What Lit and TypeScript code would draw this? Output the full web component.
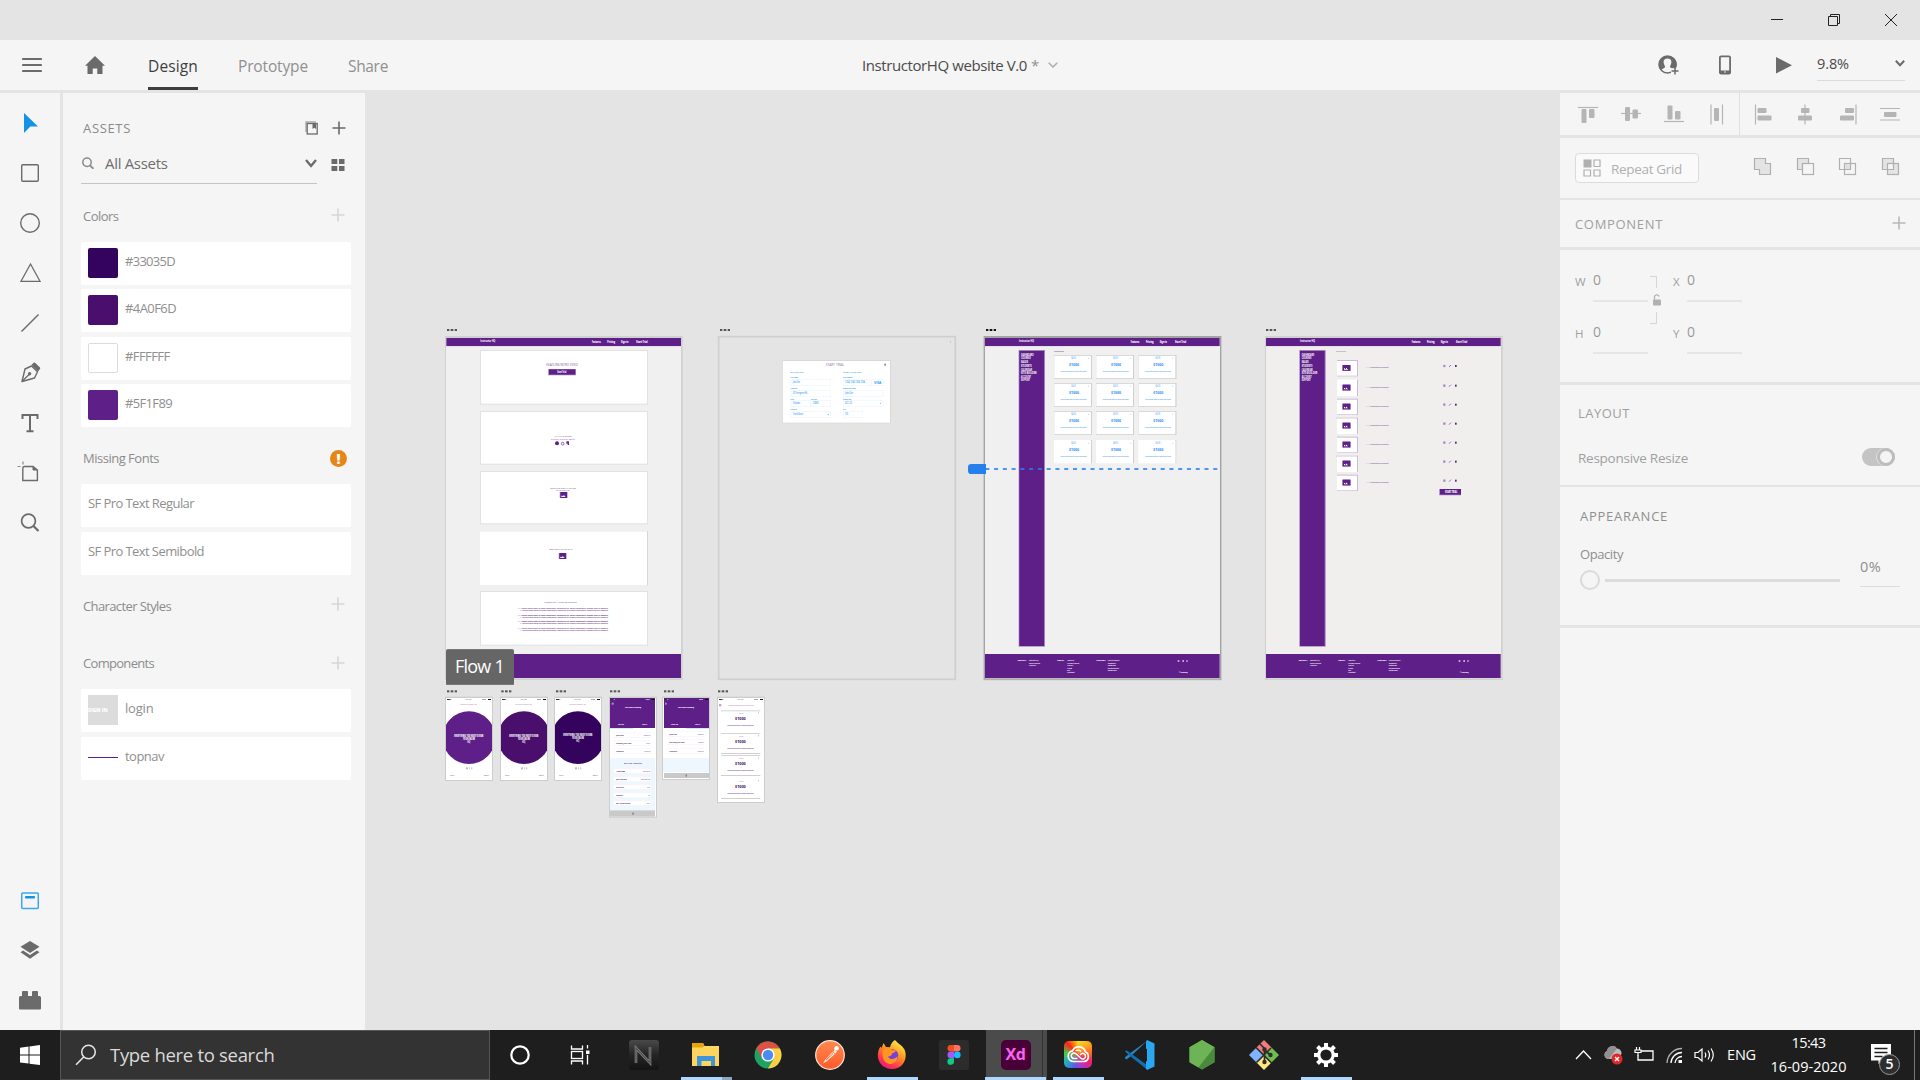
import { LitElement, html, css, svg } from "lit";
import { customElement, property } from "lit/decorators.js";

/* Label whose tracking is adjusted so that it fills a given width. */
@customElement("ui-text")
class UiText extends LitElement {
  static styles = css`
    :host { display: inline-block; flex: none; white-space: pre; }
  `;
  @property({ type: Number }) w = 0;
  render() {
    return html`<span><slot></slot></span>`;
  }
  firstUpdated() {
    const n = (this.textContent || "").length;
    if (!this.w || !n) return;
    const natural = this.getBoundingClientRect().width;
    this.style.letterSpacing = ((this.w - natural) / n).toFixed(3) + "px";
  }
}

const P = "#5f1f89";
const D = "#33035d";
const BLUE = "#2f9bf5";

const r = (x: number, y: number, w: number, h: number, f: string, o = 1) =>
  svg`<rect x=${x} y=${y} width=${w} height=${h} fill=${f} opacity=${o}></rect>`;
/* Miniature text: left edge, baseline, width. */
const t = (x: number, y: number, w: number, s: string, f: string, fs = 8, o = 1, b = 600) =>
  svg`<text x=${x} y=${y} textLength=${w} lengthAdjust="spacingAndGlyphs" font-size=${fs} font-weight=${b} fill=${f} opacity=${o}>${s}</text>`;
const dots = (x: number, y: number, f = "#555") =>
  svg`${r(x, y, 7, 6, f)}${r(x + 11, y, 8, 6, f)}${r(x + 23, y, 7, 6, f)}`;
const frame = (x: number, y: number, w: number, h: number, c: string, bg: string) =>
  svg`${r(x - 3, y - 6, w + 8, h + 11, c)}${r(x, y, w, h, bg)}`;
const card = (x: number, y: number, w: number, h: number) =>
  svg`${r(x, y, w, h, "#e2e2e2")}${r(x + 3, y + 3, w - 6, h - 6, "#fff")}`;

const topnav = (x: number) => svg`
  ${r(x, 54, 704, 24, P)}${r(x, 78, 704, 3, "#e4e0e6")}
  ${t(x + 102, 67, 45, "Instructor HQ", "#fff", 9, 1, 700)}
  ${t(x + 437, 69, 26, "Features", "#fff", 9, 1, 800)}${t(x + 483, 69, 23, "Pricing", "#fff", 9, 1, 800)}
  ${t(x + 524, 69, 22, "Sign in", "#fff", 9, 1, 800)}${t(x + 570, 69, 34, "Start Trial", "#fff", 9, 1, 800)}`;

const footer = (x: number) => svg`
  ${r(x, 1002, 704, 72, P)}
  ${t(x + 98, 1024, 26, "PRODUCT", "#fff", 6, 1, 800)}
  ${["Instructor HQ", "Online Courses", "Analytics"].map((s, i) => t(x + 132, [1024, 1033, 1039][i], [28, 33, 20][i], s, "#fff", 7, 1, 700))}
  ${t(x + 217, 1024, 20, "ABOUT", "#fff", 6, 1, 800)}
  ${["About us", "Privacy policy", "Careers", "Press", "Blog", "Contact"].map((s, i) => t(x + 247, [1024, 1033, 1039, 1048, 1054, 1060][i], [20, 36, 17, 14, 8, 22][i], s, "#fff", 7, 1, 700))}
  ${t(x + 334, 1024, 28, "SUPPORT", "#fff", 6, 1, 800)}
  ${["Help and Support", "Community", "Tutorials", "Documentation", "Knowledge"].map((s, i) => t(x + 368, [1024, 1033, 1039, 1048, 1054][i], [35, 24, 24, 34, 27][i], s, "#fff", 7, 1, 700))}
  ${r(x + 578, 1020, 5, 6, "#fff", 0.6)}${r(x + 592, 1020, 5, 6, "#fff", 0.6)}${r(x + 604, 1020, 4, 6, "#fff", 0.6)}
  ${t(x + 582, 1060, 26, "© 2020 HQ", "#fff", 6, 1, 800)}`;

const sidenav = (x: number) => svg`
  ${r(x, 90, 79, 890, "#a37fbb")}${r(x + 2, 93, 74, 885, P)}
  ${["DASHBOARD", "COURSES", "SALES", "STUDENTS", "CALENDAR", "SITE BUILDER", "ACCOUNT", "SUPPORT"].map((s, i) =>
    t(x + 7, [108, 117, 129, 141, 153, 162, 174, 183][i], [38, 29, 21, 32, 33, 47, 30, 27][i], s, "#fff", 7.5, 1, 700))}`;

const imageGlyph = (x: number, y: number, w = 20, h = 18) => svg`
  ${r(x - 2, y, w + 4, h, P, 0.45)}${r(x, y, w, h, P)}
  <path d=${`M${x + 3} ${y + h - 3}v-4h3v2h3v-3h3v3h3v2z`} fill="#fff"></path>`;

const board1 = svg`
  ${dots(51, 27)}${frame(48, 54, 705, 1021, "#d0d0d0", "#f0f0f0")}${topnav(49)}
  ${card(150, 90, 504, 164)}${card(150, 273, 504, 161)}${card(150, 453, 504, 160)}
  ${r(150, 633, 504, 163, "#d6d6d6")}${r(150, 634, 501, 162, "#fff")}${card(150, 813, 504, 164)}
  ${t(348, 137, 96, "HEADLINE/INTRO VIDEO", P, 10, 0.8, 400)}
  ${r(354, 147, 84, 19, "#b695ca")}${r(357, 148, 79, 16, P)}${t(382, 159, 27, "Start Trial", "#fff", 9.5, 1, 800)}
  ${t(373, 351, 52, "WHAT WE OFFER", P, 7, 0.85, 400)}${t(363, 360, 72, "SIMPLE AND EASY SETUP", P, 7, 0.85, 400)}
  <circle cx="381" cy="370" r="6" fill=${P}></circle>
  <circle cx="398" cy="371" r="4" fill="none" stroke=${P} stroke-width="2"></circle>${r(409, 364, 8, 7, P)}${r(413, 370, 4, 5, P)}
  ${t(360, 507, 78, "GETTING STARTED IN MINUTES", P, 7, 0.85, 400)}${t(378, 513, 40, "IS SIMPLE", P, 6, 0.8, 400)}
  ${imageGlyph(391, 516)}
  ${t(357, 690, 69, "TESTIMONIALS/REVIEWS", P, 7, 0.85, 400)}${imageGlyph(388, 699)}
  ${t(343, 849, 97, "FREQUENTLY ASKED QUESTIONS", P, 7, 0.85, 400)}
  ${[868, 888, 907, 928].map((y, i) => svg`
    ${t(264, y, 270, "• 1. Lorem ipsum dolor sit amet consectetur adipiscing elit. Donec consectetur semper sem in molestie", i === 1 || i === 2 ? D : P, 7)}
    ${t(270, y + 5, 264, "1. Lorem ipsum dolor sit amet consectetur adipiscing elit. Donec consectetur semper sem in molestie", P, 7)}`)}
  ${r(49, 1002, 704, 72, P)}`;

const field = (x: number, y: number, w: number) =>
  svg`<rect x=${x} y=${y} width=${w} height="18" fill="#fff" stroke="#eaf5fe" stroke-width="2"></rect>`;

const board2 = svg`
  ${dots(60, 27)}
  <rect x="56" y="50" width="710" height="1028" fill="none" stroke="#cfcfcf" stroke-width="5"></rect>
  ${r(750, 63, 3, 5, "#c4c4c4")}
  ${r(248, 120, 325, 190, "#d8d8d8")}${r(249, 123, 321, 185, "#fff")}
  ${t(377, 138, 56, "START TRIAL", P, 11, 0.7, 400)}${r(553, 131, 5, 6, P, 0.6)}
  ${t(271, 159, 40, "BILLING INFO", BLUE, 6)}${t(429, 159, 56, "CREDIT CARD INFO", BLUE, 6)}
  ${t(271, 174, 23, "Full Name", BLUE, 6, 1, 700)}${t(429, 174, 29, "Card Number", BLUE, 6, 1, 700)}
  ${field(273, 179, 119)}${field(430, 179, 80)}${field(514, 179, 36)}
  ${t(278, 190, 22, "John Doe", BLUE, 8)}${t(435, 190, 60, "1234 1234 1234 1234", BLUE, 8)}${t(522, 191, 22, "VISA", BLUE, 9, 1, 700)}
  ${t(271, 207, 20, "Address", BLUE, 6, 1, 700)}${t(429, 207, 39, "Name on Card", BLUE, 6, 1, 700)}
  ${field(273, 211, 119)}${field(430, 211, 119)}
  ${t(278, 222, 43, "321 Evergreen Rd", BLUE, 8)}${t(435, 222, 24, "John Doe", BLUE, 8)}
  ${t(271, 240, 11, "City", BLUE, 6, 1, 700)}${t(333, 240, 18, "Zip code", BLUE, 6, 1, 700)}${t(429, 240, 24, "Expires", BLUE, 6, 1, 700)}
  ${field(273, 242, 58)}${field(333, 242, 59)}${field(430, 242, 119)}
  ${t(279, 252, 21, "Orlando", BLUE, 8)}${t(339, 252, 17, "32801", BLUE, 8)}${t(435, 252, 21, "02 / 22", BLUE, 8)}${r(540, 249, 3, 3, BLUE, 0.6)}
  ${t(271, 270, 20, "Country", BLUE, 6, 1, 700)}${t(429, 270, 9, "CVV", BLUE, 6, 1, 700)}
  ${field(273, 275, 119)}${field(430, 275, 58)}
  ${t(279, 285, 30, "United States", BLUE, 8)}${r(383, 282, 4, 3, BLUE, 0.6)}${t(435, 285, 9, "123", BLUE, 8)}`;

const tiles: any[] = [];
[105, 189, 273, 360].forEach((y, row) =>
  [282, 408, 535].forEach((x) =>
    tiles.push(svg`
      ${r(x, y, 114, row === 3 ? 70 : 72, row === 3 ? "#fff" : "#d9d9d9")}${r(x + 111, y, 3, row === 3 ? 70 : 72, "#d0d0d0")}
      ${r(x + 1, y + 3, 110, 66, "#fff")}
      ${t(x + 51, y + 12, 15, "SALES", BLUE, 8, 0.7)}${r(x + 102, y + 8, 3, 4, BLUE, 0.3)}
      ${t(x + 45, y + 33, 30, "$1000", "#1f8ff0", 12.5, 1, 700)}
      ${t(x + 20, y + 52, 78, "lorem ipsum dolor sit amet description", BLUE, 7)}`)));

const board3 = svg`
  ${dots(78, 27, "#111")}
  ${r(69, 48, 717, 1033, "#cacaca")}${r(72, 48, 711, 1031, "#a3a3a3")}${r(75, 54, 705, 1021, "#f0f0f0")}
  ${topnav(75)}${r(780, 54, 3, 1022, "#a3a3a3")}${sidenav(176)}
  ${t(282, 96, 30, "Dashboard", P, 6.5, 0.8)}
  ${tiles}${footer(75)}${r(780, 1000, 3, 78, "#a3a3a3")}
  <path d="M78 432H34q-10 0-10 10v10q0 10 10 10H78z" fill="#2680eb"></path>
  ${Array.from({ length: 27 }, (_, i) => r(76 + i * 26.3, 444, 12, 6, "#2680eb", 0.8))}`;

const board4 = svg`
  ${dots(48, 27)}${frame(48, 54, 705, 1021, "#d0d0d0", "#f0efee")}${topnav(48)}${sidenav(148)}
  ${t(258, 96, 30, "COURSES", P, 6.5, 0.6)}
  ${[120, 179, 236, 293, 350, 407, 464].map((y, i) => svg`
    ${r(261, y, 60, 49, i % 2 ? "#fff" : "#cdb9dc")}${r(321, y, 3, 49, "#cdb9dc")}${i === 3 || i === 5 ? r(259, y, 65, 3, "#cdb9dc") : ""}
    ${r(261, i === 1 ? y : y + 3, 60, i % 2 ? 44 : 44, "#fff")}
    ${r(276, y + 15, 27, 18, P, 0.4)}${imageGlyph(279, y + 15, 21, 17)}
    ${t(348, y + 24, 68, "1. — Introduction to Design", P, 6, 0.8)}
    <circle cx="583" cy=${y + 18} r="4" fill=${P} opacity="0.45"></circle>
    <path d=${`M597 ${y + 21}l6 -6`} stroke=${P} stroke-width="3" opacity="0.6"></path>
    ${r(615, y + 15, 5, 6, P)}`)}
  ${r(567, 507, 66, 19, "#b695ca")}${r(570, 507, 63, 17, P)}${t(585, 519, 37, "START TRIAL", "#fff", 8, 1, 800)}
  ${footer(48)}`;

const phone = (x: number, w: number, h: number, dx = 3) => svg`
  ${dots(x + dx, 31)}${r(x - 3, 50, w + 6, h + 7, "#cdcdcd")}${r(x, 54, w, h, "#fff")}`;
const status = (x: number) => svg`
  ${r(x + 3, 57, 9, 3, "#333")}${r(x + 12, 57, 4, 3, "#999")}${t(x + 59, 60, 17, "9:41 AM", "#444", 5)}${r(x + 108, 57, 12, 3, "#aaa")}${r(x + 126, 57, 9, 3, "#111")}`;

const intro = (x: number, id: string, c: string, dy: number) => svg`
  ${phone(x, 138, 246, x === 213 ? 1 : 3)}${status(x)}
  ${t(x + 42, 75, 50, "INSTRUCTORHQ", P, 7, 0.6, 400)}
  <clipPath id=${id}><rect x=${x} y="54" width="138" height="246"></rect></clipPath>
  <circle cx=${x + 69} cy="173" r="79" fill=${c} clip-path=${`url(#${id})`}></circle>
  ${t(x + 25, 171 - dy, 87, "EVERYTHING YOU NEED TO RUN", "#fff", 8.5, 1, 800)}
  ${t(x + 51, 180 - dy, 36, "YOUR ONLINE", "#fff", 8, 1, 800)}${t(x + 64, 189 - dy, 9, "HQ", "#fff", 8, 1, 700)}
  ${r(x + 61, 262, 4, 6, P, 0.5)}${r(x + 69, 262, 3, 6, P, 0.25)}${r(x + 75, 262, 4, 6, P, 0.25)}
  ${t(x + 13, 289, 12, "SKIP", P, 6, 0.8)}${t(x + 113, 289, 15, "NEXT", P, 6, 0.8)}`;

const listRow = (x: number, y: number, a: string, aw: number, bw: number) => svg`
  ${r(x + 12, y - 8, 111, 15, "#fff")}${r(x + 12, y - 8, 111, 1.5, "#f2eef5")}${r(x + 12, y + 6, 111, 1.5, "#f2eef5")}
  ${t(x + 18, y + 2, aw, a, D, 6.5)}${t(x + 121 - bw, y + 2, bw, "Details", P, 6, 0.7)}`;

const phones = svg`
  ${r(48, 0, 204, 14, "#666")}
  ${intro(48, "c1", P, 0)}${intro(213, "c2", "#4a0f6d", 0)}${intro(375, "c3", D, 3)}
  ${phone(540, 138, 356, 0)}${r(540, 54, 135, 90, P)}${status(539)}
  ${r(545, 68, 6, 6, "#fff", 0.5)}${t(585, 84, 48, "INSTRUCTORHQ", "#fff", 7, 1, 800)}
  ${t(564, 135, 18, "SIGN UP", "#fff", 6.5, 1, 800)}${t(636, 135, 15, "SIGN IN", "#fff", 6.5, 1, 800)}
  ${r(540, 144, 69, 3, "#cfe8fb")}
  ${listRow(540, 166, "John Doe", 23, 20)}${listRow(540, 190, "johndoe@mail.com", 46, 12)}${listRow(540, 214, "Password", 23, 18)}
  ${r(540, 234, 135, 157, "#eff7fe")}${t(582, 252, 54, "BILLING ADDRESS", P, 6)}
  ${listRow(540, 274, "Address", 27, 22)}${listRow(540, 298, "John Evans", 32, 28)}${listRow(540, 322, "California", 24, 10)}${listRow(540, 346, "Country", 22, 7)}${listRow(540, 370, "321 Evergreen", 43, 11)}
  ${r(540, 391, 135, 19, "#c9c9c9")}${r(606, 398, 6, 6, P, 0.4)}
  ${phone(699, 138, 243, 3)}${r(702, 54, 135, 90, P)}${status(699)}
  ${r(705, 68, 5, 6, "#fff", 0.5)}${t(744, 84, 48, "INSTRUCTORHQ", "#fff", 7, 1, 800)}
  ${t(723, 135, 21, "SIGN UP", "#fff", 6.5, 1, 800)}${t(795, 135, 15, "SIGN IN", "#fff", 6.5, 1, 800)}
  ${r(768, 144, 69, 3, "#cfe8fb")}
  ${listRow(700, 163, "John Doe", 23, 18)}${listRow(700, 187, "johndoe@mail.com", 46, 16)}${listRow(700, 213, "Password", 23, 18)}
  ${r(699, 234, 138, 42, "#eff7fe")}${r(702, 279, 135, 15, "#c9c9c9")}${r(767, 283, 4, 7, P, 0.5)}
  ${phone(864, 138, 312, 0)}${status(864)}
  ${r(867, 72, 7, 7, P, 0.4)}${t(894, 78, 77, "INSTRUCTORHQ DASHBOARD", P, 7, 0.7, 400)}
  ${[91, 160, 226, 295].map((y, i) => svg`
    ${i === 3 ? "" : r(873, y - (i ? 1 : 0), 118, 3, "#d4d4d4")}
    ${t(927, y + 10, 13, "SALES", P, 7, 0.6)}${r(984, y + 6, 3, 3, P, 0.4)}
    ${t(915, y + 29, 32, "$1000", D, 12.5, 1, 700)}
    ${t(892, y + 47, 79, "lorem ipsum dolor sit amet description", P, 6.5)}`)}
  ${r(873, 219, 118, 3, "#cfcfcf")}${r(873, 285, 118, 3, "#cfcfcf")}${r(873, 354, 118, 3, "#cfcfcf")}`;

const g = (w: number, h: number, body: unknown) =>
  html`<svg class="ic" width=${w} height=${h} viewBox=${`0 0 ${w} ${h}`} fill="none">${body}</svg>`;

const plus = (cls = "") => html`<svg class="ic plus ${cls}" width="14" height="14" viewBox="0 0 14 14"><path d="M7 .5v13M.5 7h13"></path></svg>`;

const tools = [
  g(30, 30, svg`<path d="M9 5l14 13.500h-7.600L9 25z" fill="#1492e6"></path>`),
  g(30, 30, svg`<rect x="6.700" y="6.700" width="16.600" height="16.600" rx="1" stroke="#6b6b6b" stroke-width="1.400"></rect>`),
  g(30, 30, svg`<circle cx="15" cy="15" r="9.300" stroke="#6b6b6b" stroke-width="1.400"></circle>`),
  g(30, 30, svg`<path d="M15.500 6L25 23.300H6z" stroke="#6b6b6b" stroke-width="1.300"></path>`),
  g(30, 30, svg`<path d="M6.500 23.500L23.500 6.500" stroke="#6b6b6b" stroke-width="1.500"></path>`),
  g(30, 30, svg`<path d="M16.500 8l6 5.800-3 6.200L7 23.500l3-12.500z" stroke="#6b6b6b" stroke-width="1.400" stroke-linejoin="round"></path><path d="M7 23.500l7-7" stroke="#6b6b6b" stroke-width="1.300"></path><circle cx="14.600" cy="15.800" r="1.700" fill="#6b6b6b"></circle><path d="M16.500 7l2-2.200q.8-.6 1.500 0l5 4.700q.6.8 0 1.500l-2 2.400z" fill="#6b6b6b"></path>`),
  g(30, 30, svg`<path d="M7.500 11V7h15v4M15 7v16M11.500 23.200h7" stroke="#6b6b6b" stroke-width="2"></path>`),
  g(30, 30, svg`<path d="M7.800 11v11.500h14.600V12.200L18 8.500H9.500q-1.700 0-1.700 1.700z" stroke="#6b6b6b" stroke-width="1.400"></path><path d="M17.500 7.800l5.500 4.800h-4.500q-1 0-1-1z" fill="#6b6b6b"></path><path d="M2.500 8.500h3M8 3.500v3" stroke="#8a8a8a" stroke-width="1.200"></path>`),
  g(30, 30, svg`<circle cx="13.500" cy="13" r="6.900" stroke="#6b6b6b" stroke-width="1.700"></circle><path d="M18.500 18l5 5" stroke="#6b6b6b" stroke-width="2.200"></path>`),
];

const modes = [
  g(30, 30, svg`<rect x="6.700" y="7.900" width="16.600" height="15.600" rx="1" stroke="#3ea6ec" stroke-width="1.500"></rect><rect x="10" y="11" width="10" height="2.600" rx="1" fill="#1492e6"></rect>`),
  g(30, 30, svg`<path d="M15 6l9.500 5.800L15 18l-9.500-6.200z" fill="#6b6b6b"></path><path d="M5.500 17.200l2.600-1.600L15 20l6.900-4.400 2.600 1.600L15 23.800z" fill="#6b6b6b"></path>`),
  g(30, 30, svg`<path d="M4 12.500q0-1.500 1.500-1.500H7V7q0-1 1-1h4q1 0 1 1v4h4V7q0-1 1-1h4q1 0 1 1v4h1.500q1.500 0 1.500 1.500V23.500q0 1-1 1H5q-1 0-1-1z" fill="#6b6b6b"></path>`),
];

const A = "#b5b5b5";
const b = (x: number, y: number, w: number, h: number) => svg`<rect x=${x} y=${y} width=${w} height=${h} rx="1" fill=${A}></rect>`;
const l = (d: string) => svg`<path d=${d} stroke=${A} stroke-width="1.200"></path>`;
const alignA = [
  g(20, 22, svg`${l("M0 4.500h20")}${b(3.500, 6, 5, 14)}${b(11, 6, 5.500, 9)}`),
  g(20, 22, svg`${l("M0 10.500h20")}${b(4, 4, 5, 14)}${b(11.500, 6.500, 5.500, 9)}`),
  g(20, 22, svg`${l("M0 18.500h20")}${b(3.500, 2.500, 5, 14)}${b(11, 8, 5.500, 8.500)}`),
  g(20, 22, svg`${l("M4 1.500v20M15.500 1.500v20")}${b(7, 5, 5, 13)}`),
];
const alignB = [
  g(20, 22, svg`${l("M2.500 1.500v20")}${b(4.500, 5, 9, 5)}${b(4.500, 12.500, 14, 5)}`),
  g(20, 22, svg`${l("M10 1.500v20")}${b(6, 5, 8.500, 5)}${b(3, 12.500, 14, 5)}`),
  g(20, 22, svg`${l("M18 1.500v20")}${b(7, 5, 9, 5)}${b(2, 12.500, 14, 5)}`),
  g(20, 22, svg`${l("M0 5.500h20M0 17h20")}${b(4, 9, 12.500, 5)}`),
];
const bools = [
  g(19, 19, svg`<path d="M1.500 1.500h11v5h5v11h-11v-5h-5z" fill="#e4e4e4" stroke="#b0b0b0" stroke-width="1.200"></path>`),
  g(19, 19, svg`<path d="M1.500 1.500h11v5h-6v6h-5z" fill="#e4e4e4" stroke="#b0b0b0" stroke-width="1.200"></path><rect x="6.500" y="6.500" width="11" height="11" fill="#f5f5f5" stroke="#b0b0b0" stroke-width="1.200"></rect>`),
  g(19, 19, svg`<path d="M1.500 1.500h11v11h-11z" stroke="#b0b0b0" stroke-width="1.200"></path><rect x="6.500" y="6.500" width="11" height="11" stroke="#b0b0b0" stroke-width="1.200"></rect><path d="M7 7h5v5H7z" fill="#e0e0e0"></path>`),
  g(19, 19, svg`<path d="M1.500 1.500h11v5h5v11h-11v-5h-5z" fill="#e4e4e4"></path><path d="M7 7h5v5H7z" fill="#f5f5f5"></path><path d="M1.500 1.500h11v11h-11z" stroke="#b0b0b0" stroke-width="1.200"></path><rect x="6.500" y="6.500" width="11" height="11" stroke="#b0b0b0" stroke-width="1.200"></rect>`),
];

const gearTeeth = Array.from({ length: 8 }, (_, i) => svg`<rect x="13" y="3" width="4" height="5" fill="#fff" transform=${`rotate(${i * 45} 15 15)`}></rect>`);

const apps = [
  { ic: g(30, 30, svg`<circle cx="15" cy="15" r="8.700" stroke="#fff" stroke-width="2.200"></circle>`) },
  { ic: g(30, 30, svg`<path d="M4.500 5.500v3.500h11V5.500M4.500 24.500V21h11v3.500" stroke="#fff" stroke-width="1.300"></path><rect x="4.500" y="11.500" width="11" height="7" stroke="#fff" stroke-width="1.300"></rect><path d="M20.500 5v3.500M20.500 15v9.500" stroke="#fff" stroke-width="1.300"></path><rect x="19" y="10.500" width="3.500" height="3.500" fill="#fff"></rect>`) },
  { ic: g(30, 30, svg`<defs><linearGradient id="nt" x2="0" y2="1"><stop stop-color="#4a4a4a"></stop><stop offset=".5" stop-color="#242424"></stop><stop offset="1" stop-color="#141414"></stop></linearGradient></defs><rect width="30" height="30" rx="3" fill="url(#nt)"></rect><path d="M7 23V8l14 15V7" stroke="#858585" stroke-width="2.600"></path><path d="M7 23V8l14 15V7" stroke="#505050" stroke-width="1.200"></path>`) },
  { ic: g(30, 30, svg`<path d="M1 3h11l1.500 3H28v20H1z" fill="#ffd667"></path><path d="M1 3h11l1.500 3-2 1.500H1z" fill="#e5a50a"></path><path d="M1 8h27v18H1z" fill="#ffd45e"></path><path d="M6 26V16h18v10h-4v-5h-9.500v5z" fill="#3c96d8"></path>`), run: "tabs" },
  { ic: g(30, 30, svg`<circle cx="15" cy="15" r="13.500" fill="#1da462"></circle><path d="M15 8.250h11.690A13.500 13.500 0 0 1 15 28.500l5.900-10.100z" fill="#ffcd46"></path><path d="M3.310 8.250A13.500 13.500 0 0 1 26.690 8.250H15L9.100 18.400z" fill="#dd5144"></path><circle cx="15" cy="15" r="6.600" fill="#fff"></circle><circle cx="15" cy="15" r="5.200" fill="#4c8bf5"></circle>`) },
  { ic: g(30, 30, svg`<defs><linearGradient id="pm" x2="0" y2="1"><stop stop-color="#ff8a50"></stop><stop offset="1" stop-color="#ff5a28"></stop></linearGradient></defs><circle cx="15" cy="15" r="14.300" fill="url(#pm)" stroke="#ffe6dc" stroke-width="1.200"></circle><path d="M8 23.500l2-3.500 7.500-8 2.200 2.200-8 7z" fill="#ffe9e0"></path><path d="M11 20l7-6.500" stroke="#ff6c37"></path><path d="M18.200 12l1.500-2.500 2.300 2-1.800 2.300z" fill="#ffe9e0"></path><circle cx="21.600" cy="8.200" r="2.300" fill="#fff"></circle>`) },
  { ic: g(30, 30, svg`<defs><linearGradient id="ff" x1=".8" y1="0" x2=".2" y2="1"><stop stop-color="#fff44f"></stop><stop offset=".4" stop-color="#ff9a20"></stop><stop offset=".75" stop-color="#ff3750"></stop><stop offset="1" stop-color="#e31587"></stop></linearGradient></defs><path d="M18 0c2 3 7 5 9.500 9.500C31 17 27 29 15 29 6 29 .8 22 .8 15.500c0-4 1.200-7 2.700-9L4.500 8 6.500 3 9 7l4 .2C14 3 16 1 18 0z" fill="url(#ff)"></path><circle cx="15" cy="15.500" r="6.300" fill="#7a3fe0"></circle><path d="M6 9.500c3-2.500 7-2 9 .5l4 .5c-.5 2-3 2.500-4 3 0 2-2 3-4 3 1.500 3.500 7 3.500 9.500-.5 0 5-3.500 8-7 8-5 0-9.500-5-7.500-14.500z" fill="#ff9622"></path>`), run: "on" },
  { ic: g(30, 30, svg`<rect width="30" height="30" rx="2" fill="#2c2c2c"></rect><path d="M15 5h-3.200a3.300 3.300 0 0 0 0 6.600H15z" fill="#f24e1e"></path><path d="M15 5h3.200a3.300 3.300 0 0 1 0 6.600H15z" fill="#ff7262"></path><path d="M15 11.600h-3.200a3.300 3.300 0 0 0 0 6.600H15z" fill="#a259ff"></path><circle cx="18.300" cy="14.900" r="3.300" fill="#1abcfe"></circle><path d="M15 18.200h-3.200a3.300 3.300 0 1 0 3.200 3.300z" fill="#0acf83"></path>`) },
  { ic: html`<span class="xd">Xd</span>`, run: "active" },
  { ic: html`<span class="cc">${g(24, 20, svg`<path d="M7.500 16.500a5.400 5.400 0 0 1-1-10.700A7 7 0 0 1 19.500 7a5 5 0 0 1-1.500 9.500z" stroke="#fff" stroke-width="1.700"></path><path d="M11.500 13.500H8a2.800 2.800 0 1 1 2-4.800l5.500 5a2.800 2.800 0 1 0 0-5L14 10M9.500 6a4 4 0 0 1 5.500.500" stroke="#fff" stroke-width="1.500"></path>`)}</span>`, run: "on" },
  { ic: g(30, 30, svg`<path d="M22 1L6 16l-4.500 3.500L0 18.300v-1l4-3.300z" fill="#2489ca"></path><path d="M0 11.500l1.500-1.300L22 25v4.500L3.500 14.800z" fill="#1070b3"></path><path d="M22 0l7.500 3.500v23L22 30l-1-1.500V1.500z" fill="#29a8f0"></path><path d="M22 8.500L13 15l9 6.500z" fill="#1e1e1e"></path>`) },
  { ic: g(30, 30, svg`<path d="M15 0l12.500 7.200v15L15 29.500 2.500 22.200v-15z" fill="#5c9e4a"></path><path d="M15 0l12.500 7.200-16 20.300L2.500 22.200v-15z" fill="#6cb456"></path><path d="M27.500 7.200v15L15 29.500l-3.500-2z" fill="#4a8a3d"></path>`) },
  { ic: g(30, 30, svg`<path d="M15 0l7.500 7.500L15 15 7.500 7.500z" fill="#f27c7c"></path><path d="M7.500 7.500L15 15l-7.500 7.500L0 15z" fill="#80b3ff"></path><path d="M22.500 7.500L30 15l-7.500 7.500L15 15z" fill="#6fbf50"></path><path d="M15 15l7.500 7.500L15 30l-7.500-7.500z" fill="#ffe680"></path><path d="M7 7.500L22.500 23M7.500 22.500L22 8M10.500 3.500l5 5V23M15.500 10l6 5" stroke="#2e2e2e" stroke-width="1.700"></path><circle cx="15.500" cy="9.500" r="2.200" fill="#2e2e2e"></circle><circle cx="21.500" cy="15" r="2.200" fill="#2e2e2e"></circle><circle cx="15.500" cy="22" r="2.200" fill="#2e2e2e"></circle>`) },
  { ic: g(30, 30, svg`${gearTeeth}<circle cx="15" cy="15" r="7.200" stroke="#fff" stroke-width="3.200"></circle>`), run: "on" },
];

const swatches = [["#33035D", 50], ["#4A0F6D", 51], ["#FFFFFF", 44.5], ["#5F1F89", 47]] as const;

@customElement("app-root")
class AppRoot extends LitElement {
  static styles = css`
    :host { display: block; }
    * { box-sizing: border-box; }
    .app { width: 1920px; height: 1080px; display: flex; flex-direction: column; background: #e4e4e4; font-family: "Open Sans", "Noto Sans", sans-serif; font-size: 13px; color: #8c8c8c; overflow: hidden; }
    .ic { display: block; flex: none; }
    .row { display: flex; align-items: center; }
    .grow { flex: 1; }
    .g11 { width: 11px; } .g12 { width: 12px; } .g14 { width: 14px; } .g40 { width: 40px; } .g45 { width: 45px; }

    .titlebar { height: 40px; flex: none; display: flex; justify-content: flex-end; align-items: center; gap: 45px; padding-right: 23px; }
    .header { height: 50px; flex: none; display: grid; grid-template-columns: 862px 1fr auto; background: #f5f5f5; margin-bottom: 3px; }
    .header .left { display: flex; padding-left: 22px; align-items: center; }
    .home { margin-left: 43px; margin-right: 43px; }
    .tab { height: 50px; font-size: 15.5px; line-height: 42px; padding-top: 5px; color: #909090; margin-right: 40px; border-bottom: 3px solid transparent; }
    .tab.on { color: #3e3e3e; border-color: #3e3e3e; }
    .doc { display: flex; align-items: center; color: #4b4b4b; font-size: 15px; line-height: 50px; }
    .doc .star { color: #909090; margin-left: 4px; margin-right: 9px; }
    .actions { display: flex; align-items: center; padding-right: 15px; }
    .zoomer { width: 88px; height: 34px; display: flex; align-items: center; justify-content: space-between; border-bottom: 1px solid #dcdcdc; color: #4b4b4b; font-size: 14.5px; margin: -2px 0 0 25px; }
    .zoomer .ic { margin-bottom: 1px; }

    .work { flex: 1; min-height: 0; display: flex; }
    .tools { width: 60px; background: #f5f5f5; margin-right: 3px; display: flex; flex-direction: column; align-items: center; padding: 5px 0; }
    .tool { height: 50px; display: flex; align-items: center; }

    .assets { width: 302px; background: #f5f5f5; padding: 21px 14px 0 18px; display: flex; flex-direction: column; }
    .ah { height: 28px; padding: 0 5px 0 2px; gap: 14px; color: #8a8a8a; }
    .as { height: 42px; display: flex; align-items: center; gap: 14px; }
    .as > .ic { margin-top: 3px; }
    .as .box { width: 236px; height: 42px; display: flex; align-items: center; border-bottom: 1px solid #c4c4c4; color: #6e6e6e; font-size: 15px; padding: 1px 0 0 1px; }
    .sh { height: 32px; padding: 0 6px 0 2px; justify-content: space-between; margin-bottom: 10px; color: #8c8c8c; }
    .s1 { margin-top: 16px; } .s2 { margin-top: 15px; } .s3 { margin-top: 15px; margin-bottom: 25px; }
    .s1 .plus { margin-bottom: 2px; } .s3 .plus { margin-bottom: 4px; }
    .list { display: flex; flex-direction: column; gap: 5px; }
    .list.tight { height: 185px; gap: 0; justify-content: space-between; }
    .item { height: 43px; flex: none; background: #fff; border-radius: 2px; display: flex; align-items: center; gap: 7px; padding: 0 7px; color: #8f8f8f; }
    .item ui-text { margin-bottom: 5px; }
    .sw { width: 30px; height: 30px; border-radius: 2px; margin-bottom: 1px; }
    .sw.light { border: 1px solid #dcdcdc; }
    .thumb { width: 30px; height: 30px; margin-bottom: 1px; background: #dcdcdc; color: #fff; font-size: 5px; line-height: 30px; font-weight: 800; overflow: hidden; }
    .line { width: 30px; height: 1px; margin-top: 0; margin-bottom: 2px; background: #5f1f89; }
    .plus path { stroke: #6b6b6b; stroke-width: 1.6; }
    .plus.dim path { stroke: #d6d6d6; }
    .plus.mid path { stroke: #b8b8b8; }
    .warn { width: 17px; height: 17px; border-radius: 50%; background: #e68619; color: #fff; font-weight: 800; font-size: 14px; line-height: 17px; text-align: center; margin-right: -2px; }

    .canvas { flex: 1; position: relative; }
    .board { position: absolute; top: 227px; font-family: "Open Sans", sans-serif; }
    .b1 { left: 65px; } .b2 { left: 335px; } .b3 { left: 595px; } .b4 { left: 885px; }
    .phones { left: 65px; top: 587px; }
    .flow { position: absolute; left: 81px; top: 556px; width: 68px; height: 36px; background: #666; border-radius: 2px; color: #fff; font-size: 18px; line-height: 32px; padding-left: 9px; border: 1px solid #777; border-width: 1px 0; }

    .props { width: 360px; display: flex; flex-direction: column; color: #a0a0a0; }
    .props > div { background: #f5f5f5; flex: none; }
    .align { height: 42px; margin-bottom: 3px; display: flex; }
    .align .grp { display: grid; grid-template-columns: repeat(4, 43px); justify-items: center; align-items: center; padding: 0 0 0 6px; width: 179px; }
    .align .grp2 { border-left: 1px solid #e0e0e0; width: 181px; padding-left: 2px; grid-template-columns: repeat(4, 42.3px); }
    .combine { height: 60px; margin-bottom: 2px; display: flex; padding: 15px 20px 0 15px; justify-content: space-between; }
    .rg { width: 124px; height: 30px; border: 1px solid #dcdcdc; border-radius: 4px; background: #fafafa; display: flex; align-items: center; gap: 10px; padding: 0 0 1px 7px; font-size: 13.5px; color: #b0b0b0; }
    .rg ui-text { margin-top: 2px; }
    .bools { display: flex; gap: 23.7px; padding-top: 4px; }
    .comp { height: 47px; margin-bottom: 3px; padding: 1px 14px 0 15px; justify-content: space-between; }
    .comp .plus { margin-bottom: 3px; }
    .dims { height: 132px; margin-bottom: 3px; display: grid; grid-template-columns: 18px 55px 25px 14px 55px; grid-template-rows: 36px 36px; row-gap: 16px; padding: 16px 0 0 15px; }
    .dims .lab { font-size: 11.5px; line-height: 31px; }
    .dims .val { font-size: 14px; line-height: 27px; border-bottom: 2px solid #e6e6e6; color: #999; }
    .lock { grid-column: 3; grid-row: 1 / 3; padding: 10px 0 0 2px; }
    .layout { height: 100px; margin-bottom: 2px; padding: 18px 25px 0 18px; }
    .h20 { line-height: 20px; height: 20px; display: flex; }
    .resize { height: 24px; margin-top: 23px; font-size: 13.5px; justify-content: space-between; }
    .toggle { width: 33px; height: 18px; margin-bottom: 2px; border-radius: 9px; background: #c4c4c4; display: flex; justify-content: flex-end; }
    .knob { width: 18px; height: 18px; border-radius: 50%; border: 3px solid #bdbdbd; background: #f5f5f5; box-shadow: -1px 0 0 #dedede; }
    .appear { height: 138px; margin-bottom: 3px; padding: 19px 20px 0 20px; color: #8f8f8f; }
    .op { display: flex; justify-content: space-between; margin-top: 18px; }
    .slider { display: flex; align-items: center; gap: 5px; margin-top: 6px; }
    .handle { width: 20px; height: 20px; border-radius: 50%; border: 2px solid #dadada; }
    .track { width: 235px; height: 3px; background: #dcdcdc; }
    .pct { width: 40px; height: 35px; margin-top: 8px; border-bottom: 1px solid #dcdcdc; font-size: 14.5px; line-height: 30px; }
    .props .rest { flex: 1; }

    .taskbar { height: 50px; flex: none; background: #1e1e1e; display: flex; align-items: stretch; color: #fff; }
    .start { width: 60px; display: flex; align-items: center; justify-content: center; }
    .search { width: 430px; background: #333; border: 1px solid #565656; display: flex; align-items: center; gap: 13px; padding-left: 14px; font-size: 18.5px; color: #dadada; }
    .search ui-text { margin-bottom: 2px; }
    .apps { display: flex; margin-left: -1px; }
    .app-btn { width: 62px; display: flex; flex-direction: column; align-items: center; justify-content: space-between; padding-top: 10px; }
    .bar { width: 51px; height: 3px; }
    .on .bar { background: #add8ff; }
    .tabs .bar { background: linear-gradient(90deg, #add8ff 41px, #8aa8c4 41px); }
    .active { background: linear-gradient(90deg, transparent 1px, #4b4b4b 1px 57px, #333 57px 58px, #4b4b4b 58px); padding-right: 1px; }
    .active .bar { width: 61px; background: #add8ff; }
    .xd { width: 30px; height: 30px; border-radius: 5px; background: #470137; color: #ff61f6; font-weight: 700; font-size: 16px; line-height: 29px; text-align: center; letter-spacing: -0.3px; }
    .cc { width: 28px; height: 27px; margin-top: 1px; border-radius: 5px; background: radial-gradient(circle, rgba(255,90,60,.6), transparent 65%), conic-gradient(#f0e020, #ffb020, #ff7020, #f02060, #b030d0, #5060f0, #20b0c0, #40d040, #ff2020 88%, #ff8000, #f0e020); display: flex; align-items: center; justify-content: center; }
    .tray { display: flex; align-items: center; margin-left: auto; }
    .eng { font-size: 14.5px; margin-bottom: 1px; }
    .clock { display: flex; flex-direction: column; align-items: center; font-size: 14.5px; line-height: 23.5px; width: 77px; margin: 0 24px 1px 14px; }
    .note { position: relative; width: 44px; height: 50px; border-right: 1px solid #777; margin-right: 5px; padding-top: 14px; }
    .badge { position: absolute; left: 8px; top: 24px; width: 21px; height: 21px; border-radius: 50%; background: #2e2e2e; border: 1.5px solid #9a9a9a; font-size: 14px; font-weight: 600; line-height: 18px; text-align: center; }
  `;

  render() {
    return html`<div class="app">
      <div class="titlebar">
        ${g(12, 12, svg`<path d="M0 5.500h12" stroke="#222" stroke-width="1"></path>`)}
        ${g(12, 12, svg`<path d="M.5 2.500h9v9h-9zM2.500 2.500v-2h9v9h-2" stroke="#222"></path>`)}
        ${g(12, 12, svg`<path d="M0 0l12 12M12 0L0 12" stroke="#222"></path>`)}
      </div>
      <div class="header">
        <div class="left">
          ${g(20, 16, svg`<path d="M1 2h18M1 8h18M1 14h18" stroke="#6b6b6b" stroke-width="2.200" stroke-linecap="round"></path>`)}
          <div class="home">${g(20, 20, svg`<path d="M10 1l10 9.800h-2.500V19h-5.200v-5.500h-4.600V19H2.500v-8.200H0z" fill="#6b6b6b"></path>`)}</div>
          <div class="tab on"><ui-text w="50">Design</ui-text></div>
          <div class="tab"><ui-text w="70">Prototype</ui-text></div>
          <div class="tab"><ui-text w="40">Share</ui-text></div>
        </div>
        <div class="doc">
          <ui-text w="165">InstructorHQ website V.0</ui-text><span class="star">*</span>
          ${g(10, 6, svg`<path d="M.7.700L5 5 9.300.7" stroke="#b0b0b0" stroke-width="1.600"></path>`)}
        </div>
        <div class="actions">
          ${g(21, 20, svg`<circle cx="9.500" cy="9.500" r="8.500" stroke="#6b6b6b" stroke-width="1.500"></circle><path fill="#6b6b6b" d="M9.500 1a8.500 8.500 0 0 0-6.500 14l3.800-2.500c.6-.4.4-1 0-1.500C4.500 7 5.500 3.500 9.500 3.500S14.500 7 12.200 11c-.4.7-.3 1.200.2 1.500l2 1 4-1.500A8.500 8.500 0 0 0 9.500 1z"></path><path d="M13 13.500h8V20h-8z" fill="#f5f5f5"></path><path d="M17 12.500v7M13.500 16h7" stroke="#6b6b6b" stroke-width="1.500"></path>`)}
          <span class="g40"></span>
          ${g(12, 20, svg`<rect x=".9" y="1.400" width="10.200" height="17.200" rx="1.200" stroke="#6b6b6b" stroke-width="1.800"></rect><path d="M1 15.500h10v3H1z" fill="#6b6b6b"></path><circle cx="6" cy="17" r=".8" fill="#f5f5f5"></circle>`)}
          <span class="g45"></span>
          ${g(16, 18, svg`<path d="M0 1v16.500l16-8.200z" fill="#6b6b6b"></path>`)}
          <div class="zoomer"><ui-text w="32">9.8%</ui-text>${g(10, 7, svg`<path d="M.8.8L5 5.200 9.200.8" stroke="#6b6b6b" stroke-width="2"></path>`)}</div>
        </div>
      </div>

      <div class="work">
        <div class="tools">
          ${tools.map((i) => html`<div class="tool">${i}</div>`)}
          <div class="grow"></div>
          ${modes.map((i) => html`<div class="tool">${i}</div>`)}
        </div>

        <div class="assets">
          <div class="row ah"><ui-text w="48">ASSETS</ui-text><span class="grow"></span>
            ${g(13, 14, svg`<path d="M1 11V1h10" stroke="#aaa" stroke-width="1.400"></path><rect x="2.200" y="2.500" width="10" height="10.500" stroke="#6b6b6b" stroke-width="1.300"></rect><path d="M7.500 3h3.500v5L9.200 6.800 7.500 8z" fill="#6b6b6b"></path>`)}
            ${plus()}
          </div>
          <div class="as">
            <div class="box">
              ${g(12, 12, svg`<circle cx="5" cy="5.200" r="4.200" stroke="#8a8a8a" stroke-width="1.500"></circle><path d="M8 8.500l3.500 3.200" stroke="#8a8a8a" stroke-width="1.800"></path>`)}
              <span class="g11"></span><ui-text w="62.500">All Assets</ui-text><span class="grow"></span>
              ${g(12, 9, svg`<path d="M1 1l5 6 5-6" stroke="#6b6b6b" stroke-width="2.400"></path>`)}
            </div>
            ${g(14, 14, svg`<path d="M.5 1h5.800v5H.5zM8 1h5.500v5H8zM.5 8h5.800v5H.5zM8 8h5.500v5H8z" fill="#6b6b6b"></path>`)}
          </div>

          <div class="row sh s1"><ui-text w="35.500">Colors</ui-text>${plus("dim")}</div>
          <div class="list tight">
            ${swatches.map(([c, w]) => html`<div class="item"><div class="sw ${c === "#FFFFFF" ? "light" : ""}" style="background:${c}"></div><ui-text w=${w}>${c}</ui-text></div>`)}
          </div>

          <div class="row sh s2"><ui-text w="76">Missing Fonts</ui-text><div class="warn">!</div></div>
          <div class="list">
            <div class="item"><ui-text w="106">SF Pro Text Regular</ui-text></div>
            <div class="item"><ui-text w="116">SF Pro Text Semibold</ui-text></div>
          </div>

          <div class="row sh s3"><ui-text w="88">Character Styles</ui-text>${plus("dim")}</div>
          <div class="row sh"><ui-text w="71">Components</ui-text>${plus("dim")}</div>
          <div class="list">
            <div class="item"><div class="thumb">SIGN IN</div><ui-text w="28.500">login</ui-text></div>
            <div class="item"><div class="line"></div><ui-text w="39">topnav</ui-text></div>
          </div>
        </div>

        <div class="canvas">
          <svg class="board b1" width="270" height="370" viewBox="0 0 810 1110">${board1}</svg>
          <svg class="board b2" width="270" height="370" viewBox="0 0 810 1110">${board2}</svg>
          <svg class="board b3" width="270" height="370" viewBox="0 0 810 1110">${board3}</svg>
          <svg class="board b4" width="270" height="370" viewBox="0 0 810 1110">${board4}</svg>
          <svg class="board phones" width="350" height="150" viewBox="0 0 1050 450">${phones}</svg>
          <div class="flow"><ui-text w="49">Flow 1</ui-text></div>
        </div>

        <div class="props">
          <div class="align"><div class="grp">${alignA}</div><div class="grp grp2">${alignB}</div></div>
          <div class="combine">
            <div class="rg">${g(18, 18, svg`<rect x=".5" y=".5" width="8" height="8" fill="#b0b0b0"></rect><path d="M11 1h6v6.500h-6zM1 11h6.500v6H1zM11 11h6v6h-6z" stroke="#b0b0b0" stroke-width="1.200"></path>`)}<ui-text w="71">Repeat Grid</ui-text></div>
            <div class="bools">${bools}</div>
          </div>
          <div class="row comp"><ui-text w="88">COMPONENT</ui-text>${plus("mid")}</div>
          <div class="dims">
            <div class="lock">${g(12, 48, svg`<path d="M0 .5h6.500V12M6.500 36v11.500H0" stroke="#d6d6d6"></path><rect x="3" y="23.500" width="8" height="6" rx="1" fill="#b0b0b0"></rect><path d="M4.500 23.500v-2a2.300 2.300 0 0 1 4.600-.8" stroke="#b0b0b0" stroke-width="1.200"></path>`)}</div>
            <span class="lab">W</span><span class="val">0</span><span class="lab">X</span><span class="val">0</span>
            <span class="lab">H</span><span class="val">0</span><span class="lab">Y</span><span class="val">0</span>
          </div>
          <div class="layout">
            <div class="h20"><ui-text w="52">LAYOUT</ui-text></div>
            <div class="row resize"><ui-text w="110">Responsive Resize</ui-text><div class="toggle"><div class="knob"></div></div></div>
          </div>
          <div class="appear">
            <div class="h20"><ui-text w="88">APPEARANCE</ui-text></div>
            <div class="op">
              <div>
                <div class="h20"><ui-text w="43">Opacity</ui-text></div>
                <div class="slider"><div class="handle"></div><div class="track"></div></div>
              </div>
              <div class="pct"><ui-text w="21">0%</ui-text></div>
            </div>
          </div>
          <div class="rest"></div>
        </div>
      </div>

      <div class="taskbar">
        <div class="start">${g(20, 20, svg`<path d="M0 2.800l8.500-1.200v8H0zM9.500 1.400L20 0v9.600H9.500zM0 10.600h8.500v8L0 17.400zM9.500 10.600H20V20L9.500 18.700z" fill="#fff"></path>`)}</div>
        <div class="search">${g(22, 22, svg`<circle cx="13.500" cy="8" r="6.800" stroke="#e6e6e6" stroke-width="1.500"></circle><path d="M8.700 13L1 20.700" stroke="#e6e6e6" stroke-width="1.600"></path>`)}<ui-text w="164.500">Type here to search</ui-text></div>
        <div class="apps">${apps.map((a) => html`<div class="app-btn ${a.run || ""}">${a.ic}<div class="bar"></div></div>`)}</div>
        <div class="tray">
          ${g(17, 10, svg`<path d="M1 9l7.500-8L16 9" stroke="#fff" stroke-width="1.300"></path>`)}
          <span class="g11"></span>
          ${g(20, 20, svg`<path d="M5 14a4.200 4.200 0 0 1-1-8 5.500 5.500 0 0 1 10-2.500A4.500 4.500 0 0 1 18 10v4z" fill="#bcbcbc"></path><path d="M4 6a5.500 5.500 0 0 1 10-2.500L6 14H5a4.200 4.200 0 0 1-1-8z" fill="#909090"></path><circle cx="14" cy="14" r="5.500" fill="#e02828"></circle><path d="M12 12l4 4M16 12l-4 4" stroke="#fff" stroke-width="1.400"></path>`)}
          <span class="g11"></span>
          ${g(20, 18, svg`<path d="M7 5h12v9H4V9.500" stroke="#fff" stroke-width="1.300"></path><path d="M2.500 1v3M5.500 1v3M1 4h6v2.500H1zM4 6.500V10" stroke="#fff" stroke-width="1.200"></path>`)}
          <span class="g12"></span>
          ${g(17, 17, svg`<g stroke="#fff" stroke-width="1.300"><path d="M1 16A15 15 0 0 1 16 1.500" opacity=".65"></path><path d="M5 16A11 11 0 0 1 16 5.500"></path><path d="M9 16a7 7 0 0 1 7-6.500"></path></g><path d="M12.500 16v-3H16v3z" fill="#fff"></path>`)}
          <span class="g11"></span>
          ${g(21, 18, svg`<path d="M1 6.500h3L8 3v12l-4-3.500H1z" stroke="#fff" stroke-width="1.200"></path><path d="M11 6.500q1.500 2.500 0 5M14 4.500q3 4.500 0 9M17 2.500q4.500 6.500 0 13" stroke="#fff" stroke-width="1.200"></path>`)}
          <span class="g12"></span>
          <ui-text class="eng" w="29">ENG</ui-text>
          <div class="clock"><ui-text w="34">15:43</ui-text><ui-text w="76">16-09-2020</ui-text></div>
          <div class="note">${g(20, 20, svg`<path d="M0 0h20v16.500H12L7.500 20v-3.500H0z" fill="#fff"></path><path d="M3.500 4.500h13M3.500 8.500h13M3.500 12.500h8" stroke="#1e1e1e" stroke-width="1.300"></path>`)}<div class="badge">5</div></div>
        </div>
      </div>
    </div>`;
  }
}
